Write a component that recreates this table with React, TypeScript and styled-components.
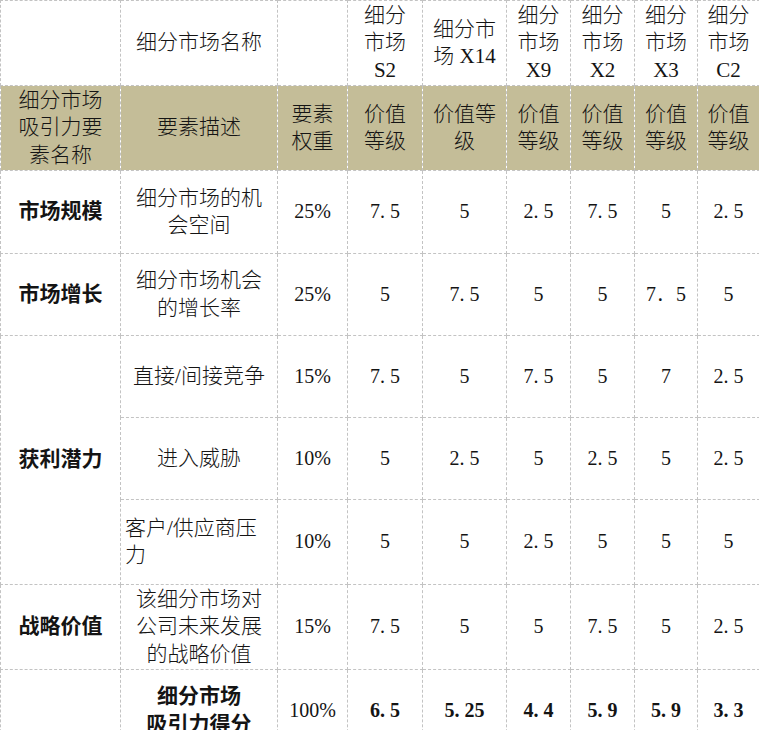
import React from 'react'
import styled, { createGlobalStyle } from 'styled-components'

const GlobalStyle = createGlobalStyle`
  html, body {
    margin: 0;
    padding: 0;
    background: #fff;
    overflow: hidden;
  }
`

const FONT = `"Liberation Serif", "Noto Sans CJK SC", serif`

const St = {
  Page: styled.div`
    width: 759px;
    height: 730px;
    overflow: hidden;
    background: #fff;
  `,
  Sheet: styled.table`
    width: 759px;
    table-layout: fixed;
    border-collapse: collapse;
    font-family: ${FONT};
    font-size: 21px;
    font-weight: 300;
    line-height: 27.5px;
    color: #141414;
  `,
  Row: styled.tr<{ $h: number }>`
    height: ${({ $h }) => $h}px;
  `,
  Cell: styled.td<{ $bold?: boolean; $align?: 'left' | 'center'; $band?: boolean }>`
    border: 1px dashed #c3c3c3;
    padding: 0 4px;
    text-align: ${({ $align }) => $align || 'center'};
    vertical-align: middle;
    font-weight: ${({ $bold }) => ($bold ? 700 : 300)};
    background: ${({ $band }) => ($band ? '#c4bd98' : '#fff')};
    white-space: nowrap;
    overflow: hidden;
  `,
  Line: styled.div`
    white-space: nowrap;
  `,
  Num: styled.span`
    font-size: 20px;
  `,
  Dot: styled.span`
    padding-right: 5px;
  `,
}

const widths = [120, 157, 70, 75, 84, 64, 64, 63, 62]

const markets = [
  ['细分', '市场', 'S2'],
  ['细分市', '场 X14'],
  ['细分', '市场', 'X9'],
  ['细分', '市场', 'X2'],
  ['细分', '市场', 'X3'],
  ['细分', '市场', 'C2'],
]

const grades = [
  ['价值', '等级'],
  ['价值等', '级'],
  ['价值', '等级'],
  ['价值', '等级'],
  ['价值', '等级'],
  ['价值', '等级'],
]

type BodyRow = {
  h: number
  factor?: string
  span?: number
  desc: string[]
  descAlign?: 'left' | 'center'
  descBold?: boolean
  weight: string
  values: string[]
  bold?: boolean
}

const rows: BodyRow[] = [
  { h: 83, factor: '市场规模', desc: ['细分市场的机', '会空间'], weight: '25%', values: ['7.5', '5', '2.5', '7.5', '5', '2.5'] },
  { h: 82, factor: '市场增长', desc: ['细分市场机会', '的增长率'], weight: '25%', values: ['5', '7.5', '5', '5', '7．5', '5'] },
  { h: 82, factor: '获利潜力', span: 3, desc: ['直接/间接竞争'], weight: '15%', values: ['7.5', '5', '7.5', '5', '7', '2.5'] },
  { h: 82, desc: ['进入威胁'], weight: '10%', values: ['5', '2.5', '5', '2.5', '5', '2.5'] },
  { h: 85, desc: ['客户/供应商压', '力'], descAlign: 'left', weight: '10%', values: ['5', '5', '2.5', '5', '5', '5'] },
  { h: 85, factor: '战略价值', desc: ['该细分市场对', '公司未来发展', '的战略价值'], weight: '15%', values: ['7.5', '5', '5', '7.5', '5', '2.5'] },
  { h: 82, factor: '', desc: ['细分市场', '吸引力得分'], descBold: true, weight: '100%', values: ['6.5', '5.25', '4.4', '5.9', '5.9', '3.3'], bold: true },
]

const Lines = ({ lines }: { lines: string[] }) => (
  <>
    {lines.map((l, i) => (
      <St.Line key={i}>{l}</St.Line>
    ))}
  </>
)

// SimSun-like wide period between digits
const Num = ({ value }: { value: string }) => {
  const i = value.indexOf('.')
  if (i < 0) return <St.Num>{value}</St.Num>
  return (
    <St.Num>
      {value.slice(0, i)}
      <St.Dot>.</St.Dot>
      {value.slice(i + 1)}
    </St.Num>
  )
}

const App = () => {
  return (
    <St.Page>
      <GlobalStyle />
      <St.Sheet>
        <colgroup>
          {widths.map((w, i) => (
            <col key={i} style={{ width: w }} />
          ))}
        </colgroup>
        <tbody>
          <St.Row $h={85}>
            <St.Cell />
            <St.Cell>细分市场名称</St.Cell>
            <St.Cell />
            {markets.map((m, i) => (
              <St.Cell key={i}>
                <Lines lines={m} />
              </St.Cell>
            ))}
          </St.Row>
          <St.Row $h={85}>
            <St.Cell $band>
              <Lines lines={['细分市场', '吸引力要', '素名称']} />
            </St.Cell>
            <St.Cell $band>要素描述</St.Cell>
            <St.Cell $band>
              <Lines lines={['要素', '权重']} />
            </St.Cell>
            {grades.map((g, i) => (
              <St.Cell key={i} $band>
                <Lines lines={g} />
              </St.Cell>
            ))}
          </St.Row>
          {rows.map((r, i) => (
            <St.Row key={i} $h={r.h}>
              {r.factor !== undefined && (
                <St.Cell $bold rowSpan={r.span}>
                  {r.factor}
                </St.Cell>
              )}
              <St.Cell $align={r.descAlign} $bold={r.descBold}>
                <Lines lines={r.desc} />
              </St.Cell>
              <St.Cell>
                <Num value={r.weight} />
              </St.Cell>
              {r.values.map((v, j) => (
                <St.Cell key={j} $bold={r.bold}>
                  <Num value={v} />
                </St.Cell>
              ))}
            </St.Row>
          ))}
        </tbody>
      </St.Sheet>
    </St.Page>
  )
}

export default App
